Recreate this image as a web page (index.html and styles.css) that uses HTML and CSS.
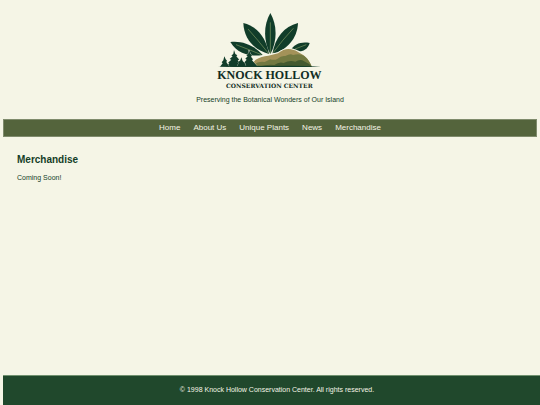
FILE: index.html
```html
<!DOCTYPE html>
<html lang="en">
<head>
    <meta charset="UTF-8">
    <meta name="viewport" content="width=device-width, initial-scale=1.0">
    <title>Merchandise - Knock Hollow Conservation Center</title>
    <link rel="stylesheet" href="styles.css">
</head>
<body>

    <header>
        <svg class="logo" viewBox="0 0 360 270" role="img" aria-label="Knock Hollow Conservation Center">
            <!-- Leaves -->
            <g class="leaf">
                <path d="M181 24 C202 60 202 108 181 148 C160 108 160 60 181 24Z"/>
                <path d="M100 54 C142 64 168 98 177 147 C130 134 102 101 100 54Z"/>
                <path d="M264 54 C262 101 231 135 187 147 C195 99 222 64 264 54Z"/>
                <path d="M61 111 C99 106 136 124 158 150 C130 155 84 151 61 111Z"/>
                <path d="M299 114 C272 109 253 118 243 134 C262 144 290 143 299 114Z"/>
            </g>
            <g class="vein">
                <path d="M181 52 V150"/>
                <path d="M114 72 Q142 103 176 146"/>
                <path d="M250 70 Q219 103 187 146"/>
                <path d="M78 119 Q118 134 154 149"/>
                <path d="M289 119 L255 132"/>
            </g>
            <!-- Hills -->
            <path class="hill-edge" d="M120 166 Q145 153 165 155 L184 149 L205 145 Q225 129 244 133 Q269 140 283 150 Q301 164 308 183"/>
            <path class="hill-light" d="M118 185 L137 164 Q154 153 175 152 L204 145 Q224 129 243 133 Q258 135 268 143 Q282 149 292 161 L306 185Z"/>
            <path class="hill-mid" d="M132 180 Q145 168 164 171 L181 163 Q193 167 203 161 Q213 151 226 153 Q241 145 249 150 Q270 144 283 153 Q299 166 305 185 H132Z"/>
            <path class="hill-dark" d="M150 184 Q171 178 193 180 Q208 169 221 174 Q239 164 256 170 Q271 161 282 169 Q297 175 305 185Z"/>
            <!-- Trees -->
            <g class="trees">
                <path d="M72 135 L76 147 L82 151 L79 154 L88 164 L83 165 L92 177 L97 185 H48 L58 174 L54 173 L64 164 L59 162 L68 154 L64 152 L70 146Z"/>
                <path d="M117 135 L121 147 L126 151 L123 155 L129 163 L126 166 L136 177 L143 185 H96 L106 175 L102 173 L110 164 L106 161 L113 154 L109 151 L115 146Z"/>
                <path d="M43 154 L47 163 L51 167 L49 171 L58 185 H30 L38 175 L35 172 L40 166Z"/>
                <path d="M94 157 L98 168 L104 174 L108 185 H80 L87 175 L84 172 L91 166Z"/>
            </g>
            <path class="ground" d="M24 185 Q90 181 180 183 Q270 181 333 185 Q180 187 24 185Z"/>
            <text class="logo-name" x="178" y="222">KNOCK HOLLOW</text>
            <text class="logo-sub" x="178" y="248">CONSERVATION CENTER</text>
        </svg>
        <p>Preserving the Botanical Wonders of Our Island</p>
    </header>

    <nav>
        <a href="#home">Home</a>
        <a href="#about">About Us</a>
        <a href="#plants">Unique Plants</a>
        <a href="#news">News</a>
        <a href="#merchandise">Merchandise</a>
    </nav>

    <main>
        <h1>Merchandise</h1>
        <p>Coming Soon!</p>
    </main>

    <footer>
        <p>&copy; 1998 Knock Hollow Conservation Center. All rights reserved.</p>
    </footer>

</body>
</html>
```
FILE: styles.css
```css
* {
    box-sizing: border-box;
}
body {
    display: flex;
    flex-direction: column;
    min-height: 100vh;
    margin: 0;
    padding: 5px 0 0 3px;
    background-color: #f5f5e6;
    color: #143d27;
    font-family: Arial, "Liberation Sans", sans-serif;
    font-size: 7px;
    line-height: 10px;
}
p {
    margin: 0;
}
header {
    margin-right: 3px;
    padding-bottom: 14px;
    text-align: center;
}
.logo {
    display: block;
    width: 120px;
    height: 90px;
    margin: 0 auto;
}
.leaf { fill: #113d2a; }
.vein { fill: none; stroke: #7e9860; stroke-width: 2; }
.hill-edge { fill: none; stroke: #f5f5e6; stroke-width: 7; }
.hill-light { fill: #a39259; }
.hill-mid { fill: #727941; }
.hill-dark { fill: #43592f; }
.trees { fill: #113d2a; stroke: #f5f5e6; stroke-width: 2; paint-order: stroke; }
.ground { fill: #113d2a; }
.logo-name,
.logo-sub {
    fill: #112d24;
    font-weight: bold;
    text-anchor: middle;
}
.logo-name { font-family: "Liberation Serif", serif; font-size: 36px; }
.logo-sub { font-family: "DejaVu Serif", serif; font-size: 18px; }
nav {
    display: flex;
    justify-content: center;
    gap: 13px;
    margin-right: 3px;
    padding: 3px 0;
    background-color: #54643c;
    border: 1px solid #7f8b6c;
}
nav a {
    color: #f5f5e6;
    font-size: 8px;
    text-decoration: none;
}
nav a:hover {
    text-decoration: underline;
}
main {
    flex: 1;
    padding: 16px 14px;
}
h1 {
    margin: 0 0 6px;
    font-size: 10px;
    line-height: 14px;
}
footer {
    padding: 9px 0 10px 11px;
    background-color: #20482c;
    border-top: 1px solid #70916f;
    color: #f5f5e6;
    text-align: center;
}
```
